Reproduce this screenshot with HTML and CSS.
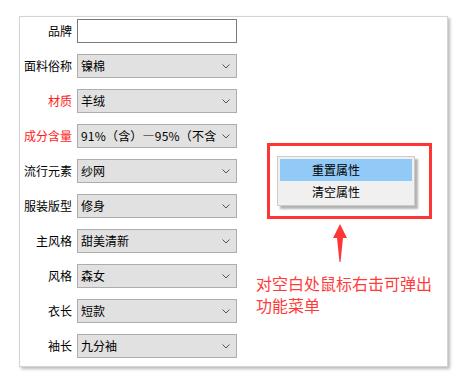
FILE: index.html
```html
<!DOCTYPE html>
<html lang="zh">
<head>
<meta charset="utf-8">
<link rel="stylesheet" href="styles.css">
</head>
<body>
<div class="panel">
  <div class="form">
    <div class="row"><span class="label">品牌</span><div class="input"></div></div>
    <div class="row"><span class="label">面料俗称</span><div class="select"><span class="val">镍棉</span><svg class="chev" viewBox="0 0 8 5"><path d="M0.5 0.5L4 4L7.5 0.5" fill="none" stroke="#555" stroke-width="1"/></svg></div></div>
    <div class="row"><span class="label req">材质</span><div class="select"><span class="val">羊绒</span><svg class="chev" viewBox="0 0 8 5"><path d="M0.5 0.5L4 4L7.5 0.5" fill="none" stroke="#555" stroke-width="1"/></svg></div></div>
    <div class="row"><span class="label req">成分含量</span><div class="select"><span class="val wide">91%（含）—95%（不含</span><svg class="chev" viewBox="0 0 8 5"><path d="M0.5 0.5L4 4L7.5 0.5" fill="none" stroke="#555" stroke-width="1"/></svg></div></div>
    <div class="row"><span class="label">流行元素</span><div class="select"><span class="val">纱网</span><svg class="chev" viewBox="0 0 8 5"><path d="M0.5 0.5L4 4L7.5 0.5" fill="none" stroke="#555" stroke-width="1"/></svg></div></div>
    <div class="row"><span class="label">服装版型</span><div class="select"><span class="val">修身</span><svg class="chev" viewBox="0 0 8 5"><path d="M0.5 0.5L4 4L7.5 0.5" fill="none" stroke="#555" stroke-width="1"/></svg></div></div>
    <div class="row"><span class="label">主风格</span><div class="select"><span class="val">甜美清新</span><svg class="chev" viewBox="0 0 8 5"><path d="M0.5 0.5L4 4L7.5 0.5" fill="none" stroke="#555" stroke-width="1"/></svg></div></div>
    <div class="row"><span class="label">风格</span><div class="select"><span class="val">森女</span><svg class="chev" viewBox="0 0 8 5"><path d="M0.5 0.5L4 4L7.5 0.5" fill="none" stroke="#555" stroke-width="1"/></svg></div></div>
    <div class="row"><span class="label">衣长</span><div class="select"><span class="val">短款</span><svg class="chev" viewBox="0 0 8 5"><path d="M0.5 0.5L4 4L7.5 0.5" fill="none" stroke="#555" stroke-width="1"/></svg></div></div>
    <div class="row"><span class="label">袖长</span><div class="select"><span class="val">九分袖</span><svg class="chev" viewBox="0 0 8 5"><path d="M0.5 0.5L4 4L7.5 0.5" fill="none" stroke="#555" stroke-width="1"/></svg></div></div>
  </div>

  <div class="callout">
    <div class="menu">
      <div class="item active">重置属性</div>
      <div class="item">清空属性</div>
    </div>
  </div>
  <svg class="arrow" viewBox="0 0 14 38"><path d="M7 0L14 14L10 14L7.5 38L6.5 38L4 14L0 14Z" fill="#ff3636"/></svg>
  <div class="note">对空白处鼠标右击可弹出功能菜单</div>
</div>
</body>
</html>
```

FILE: styles.css
```css
* { box-sizing: border-box; }
html, body { margin: 0; padding: 0; background: #fff; }
body {
  width: 467px;
  height: 380px;
  overflow: hidden;
  font-family: "Noto Sans CJK SC", "Noto Sans", sans-serif;
  font-size: 12px;
  color: #000;
}
.panel {
  position: relative;
  margin: 16px 0 0 19px;
  width: 429px;
  height: 351px;
  border: 1px solid #d4d4d4;
  box-shadow: 2px 2px 3px rgba(0, 0, 0, 0.28);
  background: #fff;
}
.form {
  display: flex;
  flex-direction: column;
  gap: 11px;
  padding-top: 2px;
}
.row {
  display: flex;
  align-items: center;
  gap: 5px;
  height: 24px;
}
.label {
  width: 52px;
  text-align: right;
  line-height: 24px;
  white-space: nowrap;
}
.label.req { color: #ff1a1a; }
.input {
  width: 160px;
  height: 24px;
  border: 1px solid #7a7a7a;
  background: #fff;
}
.select {
  width: 160px;
  height: 24px;
  border: 1px solid #adadad;
  background: #e1e1e1;
  display: flex;
  align-items: center;
  padding: 0 6px 0 3px;
  gap: 2px;
}
.val {
  flex: 1;
  overflow: hidden;
  white-space: nowrap;
  line-height: 22px;
}
.val.wide { letter-spacing: 0.2px; }
.chev {
  width: 8px;
  height: 5px;
  flex: none;
}
.callout {
  position: absolute;
  left: 247px;
  top: 126px;
  width: 165px;
  height: 76px;
  border: 3px solid #ff3535;
  padding: 10px 0 0 7px;
}
.menu {
  width: 138px;
  height: 50px;
  border: 1px solid #cccccc;
  background: #f0f0f0;
  padding: 2px;
  box-shadow: 3px 3px 2px rgba(0, 0, 0, 0.3);
}
.item {
  height: 22px;
  line-height: 22px;
  padding-left: 32px;
}
.item.active { background: #91c9f7; }
.arrow {
  position: absolute;
  left: 313px;
  top: 207px;
  width: 14px;
  height: 38px;
}
.note {
  position: absolute;
  left: 236px;
  top: 255px;
  width: 180px;
  font-size: 16px;
  line-height: 22px;
  color: #ff3b3b;
}
```
